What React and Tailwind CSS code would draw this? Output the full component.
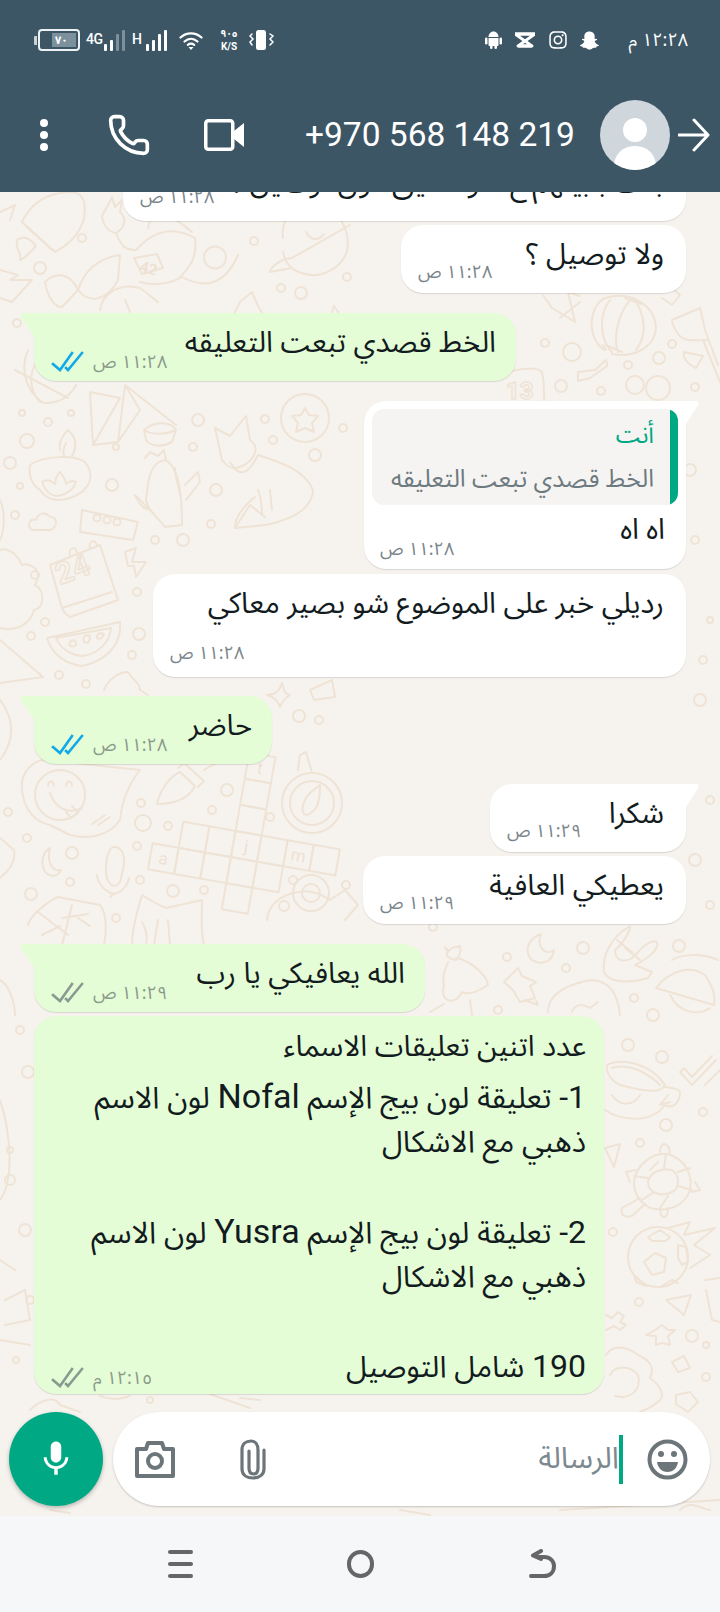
import React from "react";
import { Phone } from "lucide-react";
import { FaInstagram, FaSnapchatGhost } from "react-icons/fa";
import { MdMic } from "react-icons/md";

const ARABIC = { fontFamily: '"Noto Sans Arabic","Noto Naskh Arabic","DejaVu Sans",Roboto,sans-serif' };
const LATIN = { fontFamily: 'Roboto,"Noto Sans Arabic","DejaVu Sans",sans-serif' };

const doodlePaths = [
  // rocket
  "M22 222C30 205 45 193 70 192C85 192 86 205 84 218C80 235 68 245 55 252Z",
  "M26 226L52 250M17 240C24 235 30 238 36 246C30 252 26 258 20 260C22 252 15 250 17 240Z",
  // astronaut
  "M108 205L112 197L115 207L122 200L120 212C127 218 125 228 116 233C108 232 103 225 102 216Z",
  "M116 233C122 248 126 250 136 250C152 232 172 225 195 238C198 262 185 270 180 278C168 285 150 285 140 282",
  "M148 228C150 208 172 214 192 232M120 255C100 258 85 268 78 290C90 305 108 300 118 280Z",
  "M45 282C55 272 70 272 78 290L62 307C55 308 47 296 45 282ZM100 310C102 295 118 282 140 288C150 295 155 300 158 302M130 312L125 300",
  "M180 276C205 290 225 285 238 255M226 258A11 11 0 1 1 226 257",
  "M134 258L157 254L163 268L142 274Z",
  // planet + propeller
  "M283 238C280 216 298 204 316 206C338 208 348 226 348 246C345 268 320 280 302 273C290 270 285 262 283 252",
  "M306 232C310 240 318 242 324 234M270 270C276 262 285 258 292 258L350 225M292 268L270 272",
  // star
  "M232 318L240 302L252 292L258 306L265 318L260 336L240 335L225 322Z",
  // bunny / leaf
  "M330 340C328 328 330 316 334 306C342 316 348 330 349 345M349 345C356 330 368 318 380 315C376 330 366 346 352 355",
  // globe
  "M52 350A32 32 0 0 0 40 402A32 32 0 0 0 76 385M15 370L68 398M28 350C20 368 25 390 42 402",
  // pyramid
  "M90 392L120 398L93 445ZM90 392L93 445L118 442L140 410L125 385L118 442M125 385L176 425",
  "M144 430C155 420 172 422 176 430L172 442C160 448 150 446 146 440ZM144 430C152 435 165 435 176 430",
  // lamp
  "M30 465C45 455 75 455 85 462C95 475 92 490 70 498C55 503 45 498 40 490C32 485 28 475 30 465Z",
  "M60 450C58 440 66 432 68 430C75 436 78 445 72 456M64 456C62 448 66 444 66 443",
  "M42 482C50 478 52 482 55 484C56 474 60 472 60 472C63 476 66 480 66 484C68 482 72 480 76 482C74 488 68 494 58 496C50 496 45 490 42 482Z",
  // cactus
  "M146 500C148 480 150 462 165 460C178 465 182 490 182 525L165 527C155 515 148 510 146 500Z",
  "M145 458L150 452L158 456L164 450L166 460M175 468C175 478 178 482 180 495M135 495C140 508 148 510 150 510L135 495M185 485L198 472L200 482L186 500",
  // fox
  "M215 428L230 436L246 416L250 440C260 446 255 458 246 464C235 470 230 470 222 460Z",
  "M230 462C240 480 250 472 258 455C280 462 305 470 313 490C312 510 290 520 265 525L235 528C235 515 245 505 255 497",
  "M258 490C262 500 262 508 262 515M270 490L272 510M235 528L250 505L265 517",
  // star circle
  "M305 408L309 415L318 416L312 423L314 432L305 428L296 432L298 423L292 416L301 415Z",
  // box + cloud
  "M82 510L138 522L133 540L80 532ZM32 530C26 525 30 518 36 520C38 512 46 512 50 517C58 516 58 528 50 530Z",
  // calendar
  "M50 565L100 545L118 600L70 617C66 615 64 612 62 608ZM62 608L112 592M70 555C68 548 76 545 77 553M90 548C88 541 96 538 97 546",
  "M125 552L136 548L132 562L146 562L136 577L134 566L128 566Z",
  // watermelon
  "M47 638L120 622C122 648 102 662 82 666C66 664 52 655 47 638ZM56 638L111 628C110 644 95 655 82 656C70 655 60 648 56 638Z",
  "M70 646C68 642 72 640 74 640C78 644 76 648 70 646ZM84 642C82 636 86 634 90 636C90 642 88 644 84 642ZM97 638C96 634 100 632 104 634C102 638 100 640 97 638Z",
  // tree
  "M0 628C15 632 30 625 34 610C45 608 45 590 35 585C44 570 30 562 22 565C15 550 5 548 0 550M0 640L43 677L0 683",
  // bite + star4
  "M104 690C108 680 118 672 128 672C132 680 140 682 140 690L148 695M267 695C276 695 280 690 282 683C284 690 285 695 290 695C285 698 282 702 280 707C278 700 274 697 267 695ZM310 690L332 680L335 697L314 700Z",
  // smiley bubble
  "M22 790C20 770 35 760 45 760L140 770C128 785 122 800 120 820C110 835 90 840 70 835L50 825C35 822 24 810 22 790Z",
  "M50 793C55 808 68 815 82 808M48 786C48 780 54 780 54 786M66 786C66 780 72 780 72 786M72 806L78 813L71 818L66 812M92 824L105 815M98 825L110 817",
  // pen
  "M157 804C160 790 170 776 180 772L195 786C190 796 178 804 157 804ZM178 768L184 763L204 781L198 787M204 770L225 758",
  // compass
  "M298 770L300 755L306 752L312 773M312 812C303 820 300 810 305 800C310 790 315 790 320 785C320 800 318 808 312 812Z",
  // mic + moon
  "M106 870C106 855 110 847 114 847C122 847 125 855 124 865L120 882C115 890 106 885 106 870ZM97 875C98 885 106 892 114 894C122 892 128 885 129 878M114 894L110 897",
  "M50 848C42 852 40 865 46 873C52 878 58 876 61 870C54 872 46 864 50 848Z",
  // calculator
  "M28 925C30 915 50 900 58 897L100 905C108 915 106 935 104 945M38 912L68 935M72 905L62 945M62 918L88 914M42 935L60 926M78 918L90 926",
  // cat head
  "M132 945C132 925 138 910 142 895C150 900 158 905 166 908L202 900C202 915 200 930 204 945",
  "M142 922C146 930 148 935 146 945M158 920L154 945M168 920L170 945",
  // camera right
  "M267 920C268 905 280 895 298 892C308 890 320 893 330 900L345 890L358 905L345 920",
  // lantern
  "M604 350C585 335 590 305 605 298C630 290 655 305 656 328C654 350 630 358 612 354",
  "M610 300C598 315 600 340 612 352M632 298C620 310 612 335 618 352M634 298C645 315 648 335 636 350",
  "M625 298L642 304M606 345L622 352M606 350L603 345M607 362L607 366L590 378L578 381L578 372L595 370L606 360",
  // bamboo
  "M672 320L700 308L705 330L718 365M708 340C690 340 680 345 672 322M684 352L703 356L696 368C690 365 682 360 684 352M703 340L720 382",
  "M543 295L552 308L575 322L568 292L580 296M580 302L560 318",
  // 13
  "M505 375C510 370 535 365 542 372C545 385 544 395 544 400",
  // right top
  "M662 298L672 305L680 295L672 288",
  // lady bow
  "M448 950C442 945 446 948 448 952C452 945 456 948 460 946C462 952 458 958 456 960C445 958 446 954 448 950Z",
  "M456 958C470 960 487 975 488 985C480 990 470 996 462 992L458 998C450 1004 440 1000 444 985C442 978 444 972 448 962",
  "M444 1004L430 1012M470 1000L472 1015",
  // moon right
  "M541 934C530 938 524 948 530 958C538 966 552 964 554 950C546 956 536 948 541 934Z",
  // pin
  "M504 982L518 968L522 976L536 982L530 986L535 998L520 1002L513 990Z",
  "M525 1000L538 1005L536 1000",
  // rock hand
  "M630 926C610 938 602 956 604 972C610 985 635 982 648 978L652 972L635 965C645 960 660 950 657 942C650 938 640 950 632 958C625 962 615 962 615 950C622 945 630 932 630 926Z",
  "M617 940L632 952M625 948L640 960",
  // shell right
  "M656 988C670 970 690 965 705 975C712 985 716 995 714 1005L656 988ZM672 960C680 955 700 952 718 960M670 995C680 1015 700 1015 710 1008",
  // blob
  "M548 1012C548 995 565 985 590 980C610 980 618 995 620 1015M572 1012C575 1002 585 1005 590 1008L598 1002",
  // tick
  "M680 1072L692 1085L716 1060M705 1085L720 1070M680 1072L684 1068L692 1077L712 1056",
  // cup
  "M607 1065C620 1058 650 1062 665 1085C660 1095 640 1090 620 1085C610 1080 606 1072 607 1065ZM612 1068C630 1062 650 1075 660 1085",
  "M605 1110C620 1120 650 1125 665 1105C675 1110 680 1100 680 1092C678 1088 670 1088 665 1087M668 1095L660 1105L670 1102M612 1095C618 1105 632 1108 640 1095",
  // paper plane
  "M605 1148L620 1144L614 1167ZM666 1300L691 1295L684 1315Z",
  // turtle
  "M634 1182C636 1165 652 1152 668 1154C686 1160 693 1175 690 1190C684 1208 665 1212 650 1208C640 1202 634 1195 634 1182Z",
  "M648 1182C650 1172 660 1168 672 1170C680 1175 680 1188 672 1192C660 1198 648 1192 648 1182ZM664 1168L666 1154M678 1172L690 1168M678 1186L692 1190M668 1196L660 1208M654 1192L642 1200M648 1178L634 1176M650 1170L658 1162",
  "M636 1170L626 1172L630 1182M660 1152C660 1140 670 1142 670 1155M695 1182L700 1190L692 1192M660 1208C660 1220 668 1220 668 1208M640 1198L622 1208C620 1215 625 1218 632 1216L645 1204",
  // ball
  "M648 1237L660 1230L670 1237L666 1241L652 1241ZM644 1262L655 1253L666 1258L664 1272L652 1275ZM678 1245L686 1247L688 1262L682 1265L678 1258ZM634 1275L643 1283L646 1286L636 1282ZM678 1283L672 1280L660 1287",
  "M668 1228L690 1222L684 1235L715 1228L694 1245L710 1255L690 1268",
  // pot / star / plus
  "M705 1280L720 1278M706 1290L712 1320L720 1322",
  "M606 1315L612 1318L618 1312L624 1316L620 1322L626 1325L620 1330L614 1326L606 1330M655 1330L662 1325L668 1330L675 1330L668 1336L670 1345L662 1343L656 1345L656 1336L646 1335Z",
  "M672 1362L684 1356L690 1368L678 1372Z",
  // sun face
  "M606 1355C612 1345 625 1345 638 1355C650 1360 655 1368 650 1378C660 1385 665 1395 660 1400C655 1405 645 1410 640 1412",
  "M610 1375C615 1365 630 1365 638 1375C642 1390 630 1400 615 1396",
  "M676 1395L690 1392L698 1402L688 1412L676 1404Z",
  // bottom strip around composer
  "M30 1410C40 1400 55 1395 60 1405L80 1412M240 1398L260 1400M100 1396C112 1400 120 1400 130 1396M210 1394L250 1408M710 1510C700 1508 690 1500 680 1510M560 1510L720 1500M400 1510L430 1515M50 1510L70 1513",
  // left column bits
  "M0 212L15 205L10 220M0 270L18 275L10 280L32 280L12 302L0 298",
  "M0 500C5 510 5 530 0 540M0 700C15 720 15 740 0 760M0 838L14 850C16 860 10 870 0 878M0 980C10 985 15 1005 15 1015",
  "M0 1100C10 1130 15 1180 0 1200M0 1260L15 1270M5 1300L25 1290L30 1320L5 1325M0 1340L30 1345",
];

const circles = [
  [82, 238, 4], [40, 268, 6], [254, 241, 4], [281, 288, 4], [301, 293, 6], [347, 277, 4],
  [17, 323, 4], [22, 413, 3], [71, 413, 3], [48, 422, 4], [27, 441, 7], [10, 463, 6], [116, 447, 3], [193, 447, 4],
  [198, 420, 6], [265, 419, 4], [273, 440, 4], [343, 428, 4], [315, 455, 6], [112, 485, 6], [20, 486, 3],
  [216, 490, 6], [15, 515, 4], [211, 524, 4], [155, 540, 4], [183, 540, 6], [35, 575, 4],
  [45, 622, 4], [31, 636, 4], [137, 592, 4], [139, 634, 6], [132, 655, 4], [59, 675, 4], [86, 684, 4],
  [60, 795, 25], [299, 716, 6], [319, 720, 4], [227, 790, 6], [141, 803, 4], [212, 810, 4], [143, 823, 8], [168, 826, 4],
  [8, 812, 4], [27, 838, 4], [72, 853, 6], [70, 882, 4], [137, 846, 4], [140, 880, 4], [173, 891, 6], [204, 890, 4],
  [270, 817, 4], [293, 880, 4], [31, 894, 6], [116, 918, 4], [346, 885, 4], [312, 803, 30], [312, 803, 22],
  [305, 418, 24], [311, 893, 9], [311, 893, 18], [284, 906, 5],
  [545, 343, 4], [572, 352, 9], [628, 365, 4], [659, 358, 6], [672, 344, 4], [561, 386, 6], [601, 391, 4], [635, 385, 9], [658, 388, 12], [695, 387, 4],
  [433, 927, 4], [507, 957, 4], [583, 948, 6], [566, 968, 4], [679, 946, 6], [498, 1010, 4], [634, 998, 4],
  [653, 1015, 6], [628, 1045, 6], [662, 1057, 6], [666, 1125, 6], [703, 1112, 4], [640, 1143, 4],
  [658, 1257, 30], [613, 1232, 4], [639, 1302, 4], [692, 1336, 6], [706, 1377, 4], [706, 1345, 3],
  [10, 1180, 5], [25, 1230, 6], [20, 1030, 4], [28, 1072, 6], [10, 1150, 3],
  [16, 1360, 3], [30, 1300, 4], [150, 1400, 3], [695, 540, 4], [710, 620, 3], [700, 700, 6], [710, 800, 4], [695, 860, 6],
  [710, 905, 4], [690, 470, 6], [703, 660, 4],
];

function Crossword() {
  const u = [0.985, 0.174];
  const v = [-0.174, 0.985];
  const s = 26.5;
  const P = (c, r) => [183.3 + c * s * u[0] + r * s * v[0], 821.7 + c * s * u[1] + r * s * v[1]];
  const cells = [];
  for (let c = 0; c < 6; c++) cells.push([c, 0]);
  for (let c = -1; c < 4; c++) cells.push([c, 1]);
  for (const r of [-3, -2, -1, 2]) cells.push([2, r]);
  const letters = [["a", -1, 1], ["j", 2, 0], ["m", 4, 0], ["t", 2, -3]];
  return (
    <g>
      {cells.map(([c, r]) => (
        <polygon key={c + "_" + r} points={[P(c, r), P(c + 1, r), P(c + 1, r + 1), P(c, r + 1)].map((p) => p.join(",")).join(" ")} />
      ))}
      {letters.map(([l, c, r]) => {
        const p = P(c + 0.5, r + 0.72);
        return (
          <text key={l} x={p[0]} y={p[1]} fontSize="17" textAnchor="middle" fill="#eee1d3" stroke="none" fontFamily="Roboto" transform={`rotate(10 ${p[0]} ${p[1]})`}>
            {l}
          </text>
        );
      })}
    </g>
  );
}

function Doodles() {
  return (
    <svg className="absolute left-0 top-0 h-[1324px] w-[720px]" viewBox="0 192 720 1324" fill="none" stroke="#efe3d6" strokeWidth="2" strokeLinecap="round" strokeLinejoin="round">
      {doodlePaths.map((d, i) => (
        <path key={i} d={d} />
      ))}
      {circles.map((c, i) => (
        <circle key={i} cx={c[0]} cy={c[1]} r={c[2]} />
      ))}
      <Crossword />
      <g fill="#eee1d3" stroke="none" fontFamily="Roboto" fontWeight="700">
        <text x="139" y="271" fontSize="15" transform="rotate(15 139 271)">42</text>
        <text x="60" y="585" fontSize="30" transform="rotate(-20 60 585)" fill="none" stroke="#efe3d6" strokeWidth="1.5">24</text>
        <text x="506" y="399" fontSize="24" fill="none" stroke="#efe3d6" strokeWidth="1.5">13</text>
      </g>
      <g>
        <circle cx="97" cy="518" r="3.5" />
        <circle cx="107" cy="520" r="3.5" />
        <circle cx="117" cy="522" r="3.5" />
      </g>
    </svg>
  );
}

function Time({ text, tick, className = "" }) {
  const tone = tick ? "text-[#8a9a8b]" : "text-[#7a858b]";
  return (
    <span dir="ltr" className={"flex shrink-0 items-center " + className}>
      {tick && <Ticks color={tick} />}
      <span dir="rtl" style={ARABIC} className={"text-[18px] leading-[20px] " + tone}>{text}</span>
    </span>
  );
}

function Ticks({ color }) {
  return (
    <svg width="34" height="24" viewBox="0 0 34 24" className="mr-[8px] ml-[1px]" fill="none" stroke={color} strokeWidth="2.6" strokeLinecap="square">
      <path d="M2 14L9 20L21 3" />
      <path d="M15 18L17 20L31 3" />
    </svg>
  );
}

function Tail({ side, color }) {
  if (side === "right") {
    return (
      <svg className="absolute right-[-14px] top-0" width="16" height="26" viewBox="0 0 16 26">
        <path d="M0 0H12C14.5 0 15.500 2.500 14 4.500L0 26Z" fill={color} />
      </svg>
    );
  }
  return (
    <svg className="absolute left-[-14px] top-0" width="16" height="26" viewBox="0 0 16 26">
      <path d="M16 0H3C0.500 0 -0.500 2.500 1 4.500L16 26Z" fill={color} />
    </svg>
  );
}

function Bubble({ side, tail, className = "", children }) {
  const base = side === "right" ? "self-end bg-white" : "self-start bg-[#e5fdd6]";
  const corner = tail ? (side === "right" ? "rounded-tr-none" : "rounded-tl-none") : "";
  return (
    <div className={`relative shrink-0 rounded-[22px] shadow-[0_1px_1px_rgba(0,0,0,0.12)] ${base} ${corner} ${className}`}>
      {tail && <Tail side={side} color={side === "right" ? "#ffffff" : "#e5fdd6"} />}
      {children}
    </div>
  );
}

function Body({ children, size = "text-[29px]", lead = "leading-[36px]", className = "" }) {
  return (
    <p dir="rtl" style={ARABIC} className={`whitespace-pre ${size} ${lead} text-[#121b20] ${className}`}>
      {children}
    </p>
  );
}

function SingleLine({ side, tail, text, time, tick, w, mt }) {
  return (
    <Bubble side={side} tail={tail} className={`${w} ${mt} h-[68px]`}>
      <div className={"flex h-full justify-between pt-[12px] " + (side === "right" ? "pl-[17px] pr-[22px]" : "pl-[16px] pr-[20px]")}>
        <Time text={time} tick={tick} className="mt-[25px] self-start" />
        <Body>{text}</Body>
      </div>
    </Bubble>
  );
}

function Signal({ dim }) {
  const h = [7, 11, 17, 21];
  return (
    <div className="flex items-end gap-[2.500px]">
      {h.map((v, i) => (
        <span key={i} style={{ height: v }} className={"w-[3.500px] rounded-[1px] " + (dim && i > 1 ? "bg-[#7d919d]" : "bg-white")} />
      ))}
    </div>
  );
}

function AndroidGlyph() {
  return (
    <svg width="17" height="18" viewBox="0 0 17 18" fill="#fff">
      <path d="M3.500 6C3.500 3 5.500 0.500 8.500 0.500C11.500 0.500 13.500 3 13.500 6Z" />
      <path d="M3.500 7H13.500V14C13.500 14.800 13 15 12.500 15H4.500C4 15 3.500 14.800 3.500 14Z" />
      <rect x="0" y="6.500" width="2.500" height="7" rx="1.250" />
      <rect x="14.500" y="6.500" width="2.500" height="7" rx="1.250" />
      <rect x="5" y="14" width="2.500" height="4" rx="1.250" />
      <rect x="9.500" y="14" width="2.500" height="4" rx="1.250" />
    </svg>
  );
}

function StatusBar() {
  return (
    <div className="flex h-[22px] items-center justify-between pl-[34px] pr-[32px] text-white" style={LATIN}>
      <div className="flex items-center">
        <span className="h-[9px] w-[3px] rounded-l-[1px] bg-[#c9d2d7]" />
        <div className="ml-[1px] flex h-[22px] w-[42px] items-center justify-end rounded-[4px] border-2 border-[#eef2f4] pr-[2px]">
          <div className="flex h-[14px] w-[24px] items-center pl-[3px] text-[11px] font-bold leading-none bg-[#7d919d]" style={ARABIC}>٧٠</div>
        </div>
        <div className="ml-[6px] flex h-[22px] w-[37px] items-start">
          <span className="text-[14px] font-medium leading-[20px] tracking-[-0.5px]">4G</span>
          <div className="ml-[1px] self-end"><Signal dim /></div>
        </div>
        <div className="ml-[9px] flex h-[22px] w-[33px] items-start">
          <span className="text-[14px] font-medium leading-[20px]">H</span>
          <div className="ml-[4px] self-end"><Signal /></div>
        </div>
        <svg className="ml-[14px]" width="24" height="19" viewBox="0 0 24 19" fill="none" stroke="#fff" strokeWidth="2.200" strokeLinecap="round">
          <path d="M1.500 6.500C7.500 1 16.500 1 22.500 6.500" />
          <path d="M5.500 10.500C9.500 7 14.500 7 18.500 10.500" />
          <path d="M8.800 13.800C11 12.200 13 12.200 15.200 13.800" />
          <path d="M12 19L9.500 16H14.500Z" fill="#fff" stroke="none" />
        </svg>
        <div className="ml-[17px] flex w-[18px] flex-col items-center leading-none">
          <span dir="rtl" className="text-[10px] font-bold leading-[10px]" style={ARABIC}>٩٠٥</span>
          <span className="mt-[3px] text-[10px] font-bold leading-[10px]">K/S</span>
        </div>
        <svg className="ml-[11px]" width="25" height="20" viewBox="0 0 25 20" fill="none" stroke="#fff" strokeWidth="1.500" strokeLinecap="round">
          <rect x="7" y="0" width="10" height="20" rx="2.500" fill="#fff" stroke="none" />
          <path d="M3 4L1 6L4 9L1 12L3 15" />
          <path d="M21 4L24 6L21 9L24 12L21 15" />
        </svg>
      </div>
      <div className="flex items-center">
        <AndroidGlyph />
        <svg className="ml-[13px]" width="20" height="16" viewBox="0 0 20 16" fill="none" stroke="#fff" strokeWidth="2.800" strokeLinejoin="round">
          <path d="M0 2H20L3 14H17" />
          <path d="M20 2V2L0 2L17 14H3" />
        </svg>
        <FaInstagram size={20} className="ml-[13px]" />
        <FaSnapchatGhost size={19} className="ml-[12px]" />
        <span dir="rtl" className="ml-[30px] text-[18px] leading-[22px]" style={ARABIC}>١٢:٢٨ م</span>
      </div>
    </div>
  );
}

function Toolbar() {
  return (
    <div className="mt-[49px] flex h-[70px] items-center text-white">
      <div className="ml-[40px] flex flex-col gap-[4px]">
        <span className="h-[8px] w-[8px] rounded-full bg-white" />
        <span className="h-[8px] w-[8px] rounded-full bg-white" />
        <span className="h-[8px] w-[8px] rounded-full bg-white" />
      </div>
      <Phone size={44} strokeWidth={2} className="ml-[59px]" />
      <svg className="ml-[53px]" width="40" height="32" viewBox="0 0 40 32" fill="none">
        <rect x="1.750" y="1.750" width="27" height="28.500" rx="2.500" stroke="#fff" strokeWidth="3.500" />
        <path d="M30 12L40 4V28L30 20Z" fill="#fff" />
      </svg>
      <span className="ml-[61px] text-[33.500px] leading-[40px]" style={LATIN}>+970 568 148 219</span>
      <div className="relative ml-[25px] h-[70px] w-[70px] overflow-hidden rounded-full bg-[#cfd6dc]">
        <span className="absolute left-[23px] top-[18px] h-[24px] w-[24px] rounded-full bg-white" />
        <span className="absolute left-[14px] top-[46px] h-[40px] w-[42px] rounded-full bg-white" />
      </div>
      <svg className="ml-[8px]" width="32" height="34" viewBox="0 0 32 34" fill="none" stroke="#fff" strokeWidth="3" strokeLinecap="round" strokeLinejoin="round">
        <path d="M1 17H30M16 2L30 17L16 32" />
      </svg>
    </div>
  );
}

function Composer() {
  return (
    <div className="relative flex h-[104px] shrink-0 items-start pl-[9px] pr-[10px]">
      <div className="flex h-[94px] w-[94px] shrink-0 items-center justify-center rounded-full bg-[#00a884] text-white shadow-[0_2px_4px_rgba(0,0,0,0.25)]">
        <MdMic size={42} />
      </div>
      <div className="ml-[10px] flex h-[94px] flex-1 items-center rounded-[47px] bg-white shadow-[0_1px_2px_rgba(0,0,0,0.2)]">
        <svg className="ml-[22px]" width="40" height="37" viewBox="0 0 40 37" fill="none" stroke="#6c7579" strokeWidth="4" strokeLinejoin="round">
          <path d="M2 8H11L13 2H27L29 8H38V35H2Z" />
          <circle cx="20" cy="20" r="7" />
        </svg>
        <svg className="ml-[65px]" width="26" height="41" viewBox="0 0 26 41" fill="none" stroke="#6c7579" strokeWidth="3.200" strokeLinecap="round">
          <path d="M9 12V29C9 33 11 35 13.500 35C16 35 18 33 18 29V11C18 5 15 2 11 2C6 2 2 5 2 11V30C2 36 7 39 13 39C20 39 24 35 24 30V11" />
        </svg>
        <div className="ml-auto flex items-center">
          <span dir="rtl" style={ARABIC} className="text-[30px] leading-[36px] text-[#7c898f]">الرسالة</span>
          <span className="h-[49px] w-[4px] bg-[#00a884]" />
          <svg className="ml-[24px] mr-[22px]" width="41" height="41" viewBox="0 0 41 41">
            <circle cx="20.500" cy="20.500" r="18" fill="none" stroke="#6c7579" strokeWidth="4" />
            <circle cx="14" cy="15" r="3" fill="#6c7579" />
            <circle cx="27" cy="15" r="3" fill="#6c7579" />
            <path d="M10 23H31C30 30 25 33 20.500 33C16 33 11 30 10 23Z" fill="#6c7579" />
          </svg>
        </div>
      </div>
    </div>
  );
}

function NavBar() {
  return (
    <div className="flex h-[96px] shrink-0 items-start bg-[#f6f7f9] pt-[34px]">
      <div className="ml-[168px] flex h-[28px] w-[25px] flex-col justify-between">
        <span className="h-[4px] rounded-full bg-[#666666]" />
        <span className="h-[4px] rounded-full bg-[#666666]" />
        <span className="h-[4px] rounded-full bg-[#666666]" />
      </div>
      <span className="ml-[154px] h-[28px] w-[27px] rounded-full border-[4px] border-[#666666]" />
      <svg className="ml-[154px] -mt-[1px]" width="28" height="30" viewBox="0 0 28 30" fill="none" stroke="#666666" strokeWidth="4" strokeLinecap="round" strokeLinejoin="round">
        <path d="M3 27H16C22 27 26 23 26 17C26 12 22 8 16 8H10" />
        <path d="M13 2L5 6.500L13 10" />
      </svg>
    </div>
  );
}

export default function App() {
  return (
    <div className="flex h-[1612px] w-[720px] flex-col overflow-hidden bg-[#f6f3ee]">
      <header className="relative z-10 h-[192px] shrink-0 bg-[#3d5665] pt-[29px]">
        <StatusBar />
        <Toolbar />
      </header>
      <div className="relative flex min-h-0 flex-1 flex-col">
        <Doodles />
        <main className="relative flex min-h-0 flex-1 flex-col justify-end overflow-hidden px-[34px] pb-[18px]">
          <Bubble side="right" className="h-[110px] w-[563px]">
            <div className="flex h-full flex-col justify-end pb-[14px] pl-[17px] pr-[22px]">
              <Body className="text-right">بنت بابيلهم ع شو تعليق دون توصيل ؟</Body>
              <Time text="١١:٢٨ ص" className="-mt-[14px] self-start" />
            </div>
          </Bubble>
          <SingleLine side="right" text="ولا توصيل ؟" time="١١:٢٨ ص" w="w-[285px]" mt="mt-[4px]" />
          <SingleLine side="left" tail text="الخط قصدي تبعت التعليقه" time="١١:٢٨ ص" tick="#11a9e8" w="w-[482px]" mt="mt-[20px]" />
          <Bubble side="right" tail className="mt-[20px] h-[168px] w-[322px] px-[8px] pt-[8px]">
            <div className="flex h-[96px] flex-row-reverse overflow-hidden rounded-[12px] bg-[#f5f4f2]">
              <span className="w-[8px] shrink-0 bg-[#00a884]" />
              <div dir="rtl" style={ARABIC} className="flex-1 pr-[16px] pt-[9px]">
                <p className="text-[24px] leading-[36px] text-[#00a884]">أنت</p>
                <p className="mt-[7px] whitespace-pre text-[24.500px] leading-[36px] text-[#6d7a80]">الخط قصدي تبعت التعليقه</p>
              </div>
            </div>
            <Body lead="leading-[34px]" className="pr-[13px] pt-[8px]">اه اه</Body>
            <Time text="١١:٢٨ ص" className="-mt-[8px] ml-[8px] self-start" />
          </Bubble>
          <Bubble side="right" className="mt-[5px] h-[103px] w-[533px] pl-[17px] pr-[22px] pt-[12px]">
            <Body>رديلي خبر على الموضوع شو بصير معاكي</Body>
            <Time text="١١:٢٨ ص" className="mt-[21px]" />
          </Bubble>
          <SingleLine side="left" tail text="حاضر" time="١١:٢٨ ص" tick="#11a9e8" w="w-[238px]" mt="mt-[19px]" />
          <SingleLine side="right" tail text="شكرا" time="١١:٢٩ ص" w="w-[196px]" mt="mt-[20px]" />
          <SingleLine side="right" text="يعطيكي العافية" time="١١:٢٩ ص" w="w-[323px]" mt="mt-[4px]" />
          <SingleLine side="left" tail text="الله يعافيكي يا رب" time="١١:٢٩ ص" tick="#8b9a90" w="w-[391px]" mt="mt-[20px]" />
          <Bubble side="left" className="mt-[4px] h-[378px] w-[570px] pl-[16px] pr-[18px] pt-[12px]">
            <Body lead="leading-[38px]">عدد اتنين تعليقات الاسماء</Body>
            <Body size="text-[30px]" lead="leading-[44px]" className="mt-[8px]">
              <span style={LATIN} className="text-[32px]">1-</span>
              {" تعليقة لون بيج الإسم "}
              <span style={LATIN} className="text-[34px]">Nofal</span>
              {" لون الاسم\nذهبي مع الاشكال"}
            </Body>
            <Body size="text-[30px]" lead="leading-[44px]" className="mt-[44px]">
              <span style={LATIN} className="text-[32px]">2-</span>
              {" تعليقة لون بيج الإسم "}
              <span style={LATIN} className="text-[34px]">Yusra</span>
              {" لون الاسم\nذهبي مع الاشكال"}
            </Body>
            <div className="mt-[44px] flex items-end justify-between">
              <Time text="١٢:١٥ م" tick="#8b9a90" />
              <Body size="text-[30px]" lead="leading-[44px]">
                <span style={LATIN} className="text-[32px]">190</span>
                {" شامل التوصيل"}
              </Body>
            </div>
          </Bubble>
        </main>
        <Composer />
      </div>
      <NavBar />
    </div>
  );
}
